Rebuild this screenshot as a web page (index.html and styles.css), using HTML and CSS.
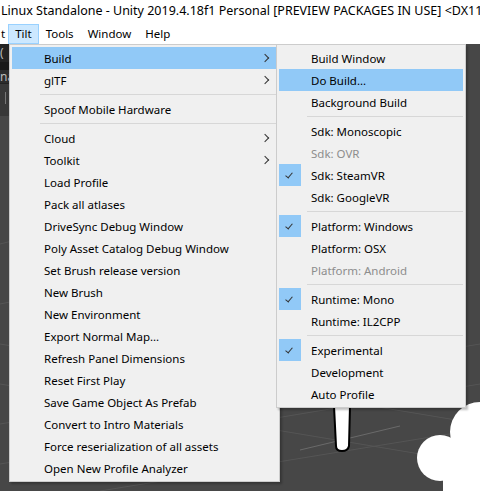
FILE: index.html
```html
<!DOCTYPE html>
<html>
<head>
  <title>Unity - Tilt menu</title>
  <link rel="stylesheet" href="styles.css">
</head>
<body>
  <div class="titlebar">Linux Standalone - Unity 2019.4.18f1 Personal [PREVIEW PACKAGES IN USE] &lt;DX11&gt;</div>
  <div class="menubar">
    <span class="top-item cut">t</span>
    <span class="top-item active">Tilt</span>
    <span class="top-item">Tools</span>
    <span class="top-item">Window</span>
    <span class="top-item">Help</span>
  </div>

  <div class="workspace">
    <div class="side-strip">
      <div class="band b1">(</div>
      <div class="band b2"></div>
      <div class="band b3">na</div>
      <div class="band b4"><span class="tick"></span></div>
    </div>

    <svg class="scene" width="480" height="447" viewBox="0 0 480 447">
      <g stroke="#555" stroke-width="1" fill="none">
        <line x1="0" y1="380" x2="480" y2="300"/>
        <line x1="0" y1="420" x2="480" y2="340"/>
        <line x1="100" y1="447" x2="480" y2="385"/>
        <line x1="0" y1="340" x2="480" y2="420"/>
        <line x1="0" y1="300" x2="480" y2="380"/>
        <line x1="0" y1="200" x2="20" y2="195"/>
        <line x1="0" y1="260" x2="20" y2="256"/>
      </g>
      <line x1="300" y1="406" x2="400" y2="382" stroke="#6a6a6a"/>
      <path d="M334 362 L350 362 L349 402 Q348 407 342 407 Q336 407 336 402 Z" fill="#fff" stroke="#000" stroke-width="2"/>
      <g fill="#fff">
        <circle cx="440" cy="414" r="23"/>
        <circle cx="480" cy="388" r="30"/>
        <rect x="443" y="395" width="37" height="52"/>
      </g>
    </svg>

    <div class="menu main-menu">
      <div class="item selected"><span class="check"></span><span class="label">Build</span><span class="arrow"></span></div>
      <div class="item"><span class="check"></span><span class="label">glTF</span><span class="arrow"></span></div>
      <div class="sep"></div>
      <div class="item"><span class="check"></span><span class="label">Spoof Mobile Hardware</span></div>
      <div class="sep"></div>
      <div class="item"><span class="check"></span><span class="label">Cloud</span><span class="arrow"></span></div>
      <div class="item"><span class="check"></span><span class="label">Toolkit</span><span class="arrow"></span></div>
      <div class="item"><span class="check"></span><span class="label">Load Profile</span></div>
      <div class="item"><span class="check"></span><span class="label">Pack all atlases</span></div>
      <div class="item"><span class="check"></span><span class="label">DriveSync Debug Window</span></div>
      <div class="item"><span class="check"></span><span class="label">Poly Asset Catalog Debug Window</span></div>
      <div class="item"><span class="check"></span><span class="label">Set Brush release version</span></div>
      <div class="item"><span class="check"></span><span class="label">New Brush</span></div>
      <div class="item"><span class="check"></span><span class="label">New Environment</span></div>
      <div class="item"><span class="check"></span><span class="label">Export Normal Map...</span></div>
      <div class="item"><span class="check"></span><span class="label">Refresh Panel Dimensions</span></div>
      <div class="item"><span class="check"></span><span class="label">Reset First Play</span></div>
      <div class="item"><span class="check"></span><span class="label">Save Game Object As Prefab</span></div>
      <div class="item"><span class="check"></span><span class="label">Convert to Intro Materials</span></div>
      <div class="item"><span class="check"></span><span class="label">Force reserialization of all assets</span></div>
      <div class="item"><span class="check"></span><span class="label">Open New Profile Analyzer</span></div>
    </div>

    <div class="menu sub-menu">
      <div class="item"><span class="check"></span><span class="label">Build Window</span></div>
      <div class="item selected"><span class="check"></span><span class="label">Do Build...</span></div>
      <div class="item"><span class="check"></span><span class="label">Background Build</span></div>
      <div class="sep"></div>
      <div class="item"><span class="check"></span><span class="label">Sdk: Monoscopic</span></div>
      <div class="item disabled"><span class="check"></span><span class="label">Sdk: OVR</span></div>
      <div class="item"><span class="check on"></span><span class="label">Sdk: SteamVR</span></div>
      <div class="item"><span class="check"></span><span class="label">Sdk: GoogleVR</span></div>
      <div class="sep"></div>
      <div class="item"><span class="check on"></span><span class="label">Platform: Windows</span></div>
      <div class="item"><span class="check"></span><span class="label">Platform: OSX</span></div>
      <div class="item disabled"><span class="check"></span><span class="label">Platform: Android</span></div>
      <div class="sep"></div>
      <div class="item"><span class="check on"></span><span class="label">Runtime: Mono</span></div>
      <div class="item"><span class="check"></span><span class="label">Runtime: IL2CPP</span></div>
      <div class="sep"></div>
      <div class="item"><span class="check on"></span><span class="label">Experimental</span></div>
      <div class="item"><span class="check"></span><span class="label">Development</span></div>
      <div class="item"><span class="check"></span><span class="label">Auto Profile</span></div>
    </div>
  </div>
</body>
</html>
```

FILE: styles.css
```css
body {
  margin: 0;
  width: 480px;
  height: 491px;
  overflow: hidden;
  background: #fff;
  font-family: "Noto Sans", "Open Sans", sans-serif;
  font-size: 11.5px;
  color: #000;
}

.titlebar {
  height: 23px;
  line-height: 22px;
  padding-left: 1px;
  white-space: nowrap;
  font-size: 12.5px;
}

.menubar {
  display: flex;
  height: 21px;
  align-items: flex-start;
}

.top-item {
  height: 18px;
  line-height: 17px;
  padding: 0 6px;
  margin-top: 1px;
  border: 1px solid transparent;
}

.top-item.cut {
  margin-left: -6px;
  padding-right: 2px;
}

.top-item.active {
  background: #cce8ff;
  border-color: #99d1ff;
}

.workspace {
  position: relative;
  height: 447px;
  background: #474747;
}

.side-strip {
  position: relative;
  z-index: 1;
  width: 9px;
  overflow: hidden;
  color: #bbb;
  font-size: 12px;
}

.band {
  white-space: nowrap;
}

.b1 {
  height: 18px;
  background: #232323;
  line-height: 18px;
}

.b2 {
  height: 8px;
  background: #191919;
}

.b3 {
  height: 13px;
  background: #2c2c2c;
  line-height: 13px;
}

.b4 {
  height: 32px;
  background: #383838;
  border-top: 1px solid #222;
}

.tick {
  display: block;
  width: 1px;
  height: 12px;
  margin: 8px 0 0 5px;
  background: #777;
}

.scene {
  position: absolute;
  left: 0;
  top: 0;
  z-index: 0;
}

.menu {
  position: absolute;
  top: 0;
  z-index: 2;
  background: #f0f0f0;
  border: 1px solid #cccccc;
  padding: 2px;
  box-shadow: 2px 2px 2px rgba(0, 0, 0, 0.25);
}

.main-menu {
  left: 9px;
  width: 265px;
}

.sub-menu {
  left: 276px;
  width: 184px;
  z-index: 3;
}

.item {
  display: flex;
  align-items: center;
  height: 22px;
  white-space: nowrap;
}

.item.selected {
  background: #91c9f7;
}

.item.disabled {
  color: #8d8d8d;
}

.check {
  width: 22px;
  height: 22px;
  flex: none;
  position: relative;
}

.check.on {
  background: #91c9f7;
}

.check.on::after {
  content: "";
  position: absolute;
  left: 8px;
  top: 7px;
  width: 3px;
  height: 6px;
  border-right: 1.5px solid #333;
  border-bottom: 1.5px solid #333;
  transform: rotate(40deg);
}

.label {
  margin-left: 10px;
  flex: 1;
}

.arrow {
  width: 5px;
  height: 5px;
  margin-right: 9px;
  border-right: 1px solid #333;
  border-bottom: 1px solid #333;
  transform: rotate(-45deg);
}

.sep {
  height: 1px;
  margin: 3px 0 3px 28px;
  background: #d7d7d7;
}
```
